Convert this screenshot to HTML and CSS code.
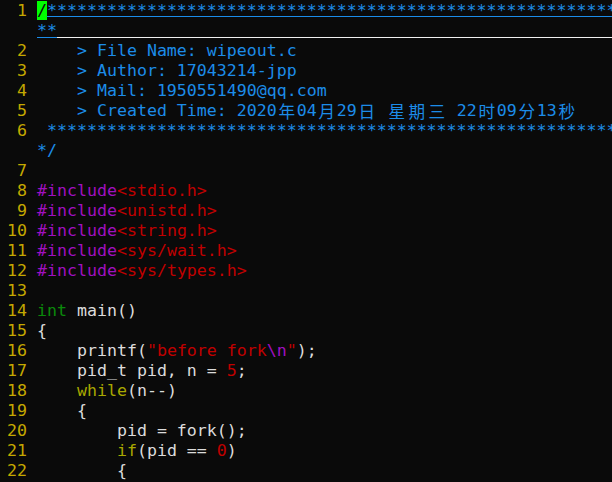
FILE: index.html
```html
<!DOCTYPE html>
<html>
<head>
<meta charset="utf-8">
<link rel="stylesheet" href="styles.css">
</head>
<body>
<div class="vim">
  <div class="row"><span class="ln">1</span><span class="code cm cl0"><span class="cur">/</span>**********************************************************************</span></div>
  <div class="row"><span class="ln"></span><span class="code cm cl1">**</span><span class="fill"></span></div>
  <div class="row"><span class="ln">2</span><span class="code cm">    &gt; File Name: wipeout.c</span></div>
  <div class="row"><span class="ln">3</span><span class="code cm">    &gt; Author: 17043214-jpp</span></div>
  <div class="row"><span class="ln">4</span><span class="code cm">    &gt; Mail: 1950551490@qq.com</span></div>
  <div class="row"><span class="ln">5</span><span class="code cm">    &gt; Created Time: 2020<span class="w">年</span>04<span class="w">月</span>29<span class="w">日</span> <span class="w">星</span><span class="w">期</span><span class="w">三</span> 22<span class="w">时</span>09<span class="w">分</span>13<span class="w">秒</span></span></div>
  <div class="row"><span class="ln">6</span><span class="code cm"> *********************************************************************</span></div>
  <div class="row"><span class="ln"></span><span class="code cm">*/</span></div>
  <div class="row"><span class="ln">7</span><span class="code"></span></div>
  <div class="row"><span class="ln">8</span><span class="code"><span class="pp">#include</span><span class="str">&lt;stdio.h&gt;</span></span></div>
  <div class="row"><span class="ln">9</span><span class="code"><span class="pp">#include</span><span class="str">&lt;unistd.h&gt;</span></span></div>
  <div class="row"><span class="ln">10</span><span class="code"><span class="pp">#include</span><span class="str">&lt;string.h&gt;</span></span></div>
  <div class="row"><span class="ln">11</span><span class="code"><span class="pp">#include</span><span class="str">&lt;sys/wait.h&gt;</span></span></div>
  <div class="row"><span class="ln">12</span><span class="code"><span class="pp">#include</span><span class="str">&lt;sys/types.h&gt;</span></span></div>
  <div class="row"><span class="ln">13</span><span class="code"></span></div>
  <div class="row"><span class="ln">14</span><span class="code"><span class="ty">int</span> main()</span></div>
  <div class="row"><span class="ln">15</span><span class="code">{</span></div>
  <div class="row"><span class="ln">16</span><span class="code">    printf(<span class="str">"before fork</span><span class="esc">\n</span><span class="str">"</span>);</span></div>
  <div class="row"><span class="ln">17</span><span class="code">    pid_t pid, n = <span class="num">5</span>;</span></div>
  <div class="row"><span class="ln">18</span><span class="code">    <span class="kw">while</span>(n--)</span></div>
  <div class="row"><span class="ln">19</span><span class="code">    {</span></div>
  <div class="row"><span class="ln">20</span><span class="code">        pid = fork();</span></div>
  <div class="row"><span class="ln">21</span><span class="code">        <span class="kw">if</span>(pid == <span class="num">0</span>)</span></div>
  <div class="row"><span class="ln">22</span><span class="code">        {</span></div>
</div>
</body>
</html>
```

FILE: styles.css
```css
html, body {
  margin: 0;
  padding: 0;
  background: #0a0a0a;
}

.vim {
  width: 612px;
  height: 482px;
  padding-top: 1px;
  box-sizing: border-box;
  overflow: hidden;
  font-family: "DejaVu Sans Mono", monospace;
  font-size: 16.6px;
  color: #dcdcdc;
}

.row {
  display: flex;
  height: 20px;
  line-height: 20px;
  white-space: pre;
  overflow: hidden;
}

.ln {
  flex: none;
  width: 27px;
  padding-right: 10px;
  text-align: right;
  color: #c4a800;
}

.code {
  flex: none;
}

.cl0 {
  flex: 1;
  height: 15px;
  border-bottom: 1px solid #1c8ce8;
  overflow: visible;
}

.cl1 {
  height: 16px;
  border-bottom: 1px solid #1c8ce8;
}

.fill {
  flex: 1;
  height: 16px;
  border-bottom: 1px solid #f0f0f0;
}

.cur {
  background: #00ff00;
  color: #0a0a0a;
}

.cm { color: #1c8ce8; }
.pp { color: #a010c0; }
.str { color: #c00000; }
.esc { color: #a010c0; }
.num { color: #c00000; }
.ty { color: #0a8a0a; }
.kw { color: #a8a800; }

.w {
  display: inline-block;
  width: 20px;
  text-align: center;
  font-family: "Noto Sans CJK SC", sans-serif;
  font-size: 16.6px;
  line-height: 20px;
  vertical-align: top;
}
```
